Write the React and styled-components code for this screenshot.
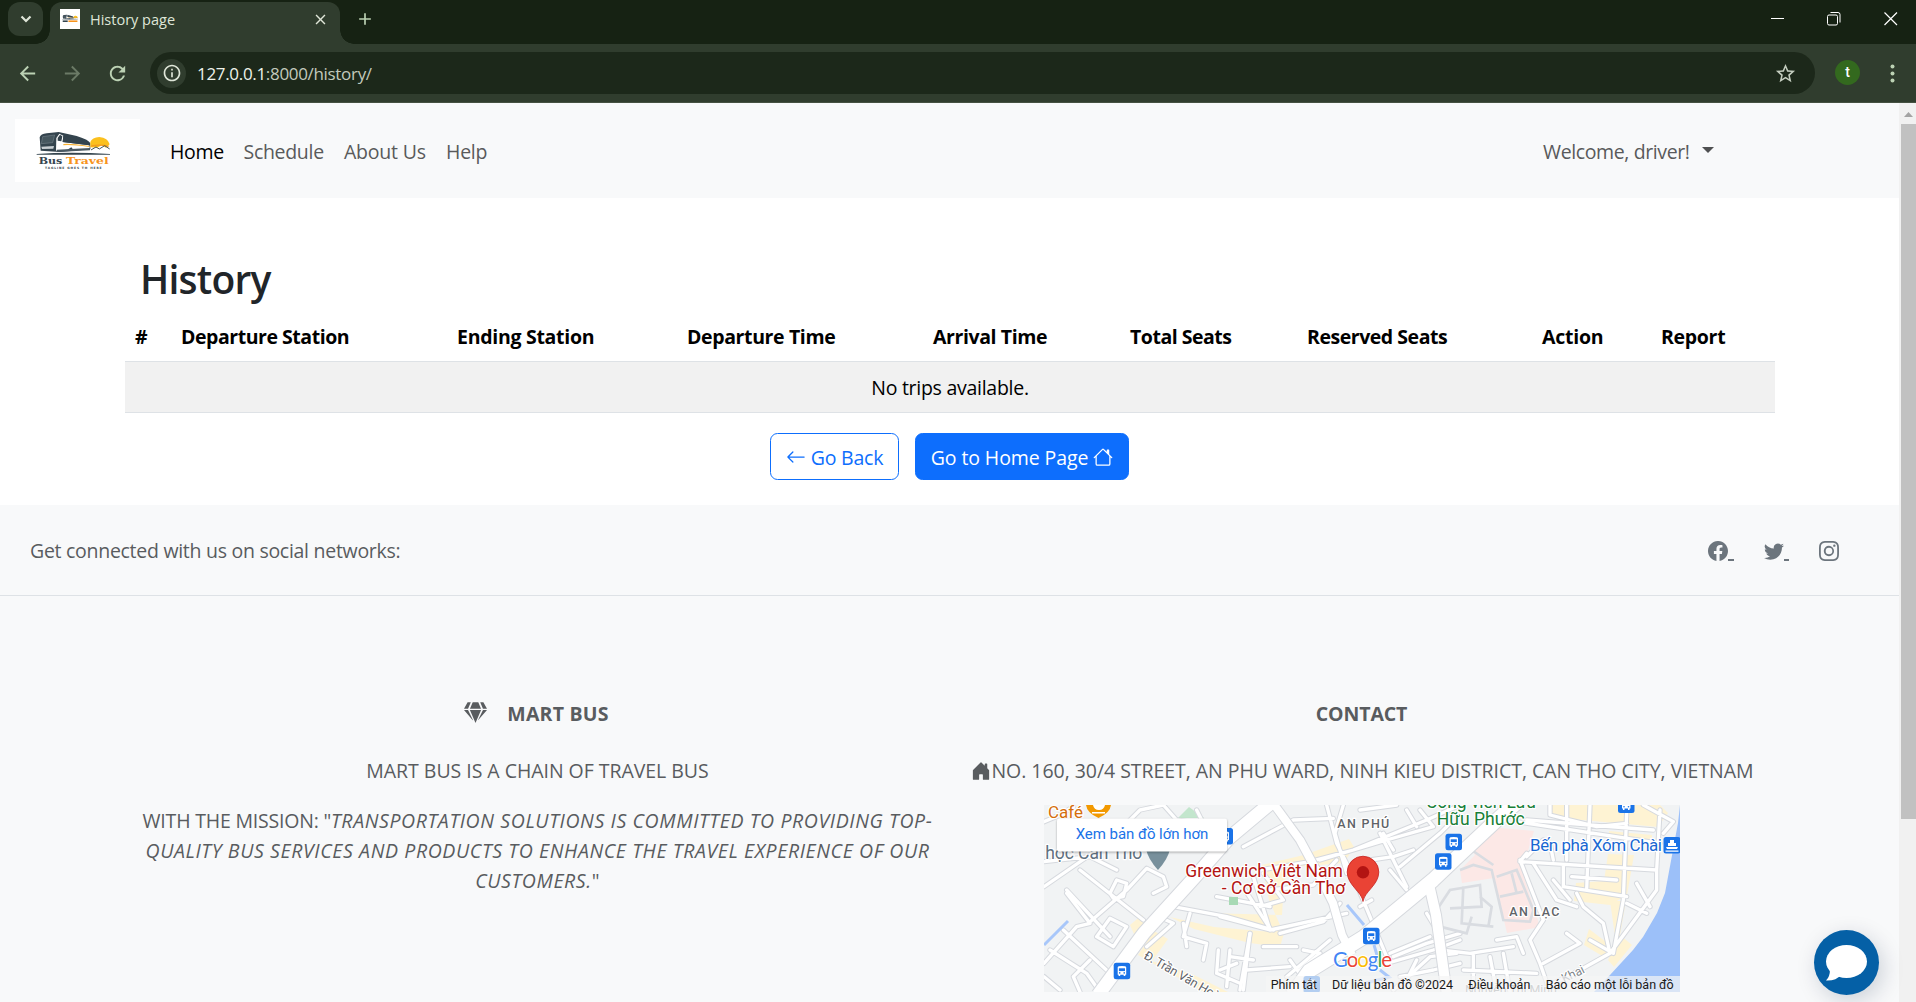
import React from "react";
import styled, { createGlobalStyle } from "styled-components";
import { BsArrowLeft, BsHouse, BsFacebook, BsTwitter, BsInstagram, BsHouseDoorFill } from "react-icons/bs";
import { FaGem } from "react-icons/fa";
import { MdArrowBack, MdArrowForward, MdRefresh, MdStarBorder, MdInfoOutline, MdClose, MdAdd } from "react-icons/md";

const sans = `"Open Sans", "Noto Sans", sans-serif`;

const Global = createGlobalStyle`
  * { box-sizing: border-box; }
  body { margin: 0; overflow: hidden; background: #fff; font-family: ${sans}; font-size: 19.5px; line-height: 30px; color: #212529; }
  h2, h6, p { margin: 0; }
  svg { display: block; }
`;

const Shell = styled.div`display: flex; flex-direction: column; height: 1002px; overflow: hidden;`;
const T = styled.span`display: inline-block; padding-top: 2px; white-space: nowrap; letter-spacing: ${(p) => p.$ls || 0}px;`;
const Slanted = styled.em`letter-spacing: .61px;`;

/* browser chrome */
const TabStrip = styled.div`height: 44px; flex: none; background: #162213; display: flex; align-items: flex-start; padding: 2px 0 0 8px;`;
const TabSearch = styled.div`width: 35px; height: 34px; border-radius: 12px; background: #303d2e; display: flex; align-items: center; justify-content: center;`;
const Tab = styled.div`
  position: relative; margin-left: 7px; width: 290px; height: 42px; border-radius: 12px 12px 0 0; background: #303d2e;
  display: flex; align-items: center; padding: 0 11px 7px 10px; font-size: 14.5px; color: #dfe6d8;
  &::before, &::after { content: ""; position: absolute; bottom: 0; width: 14px; height: 14px; }
  &::before { left: -14px; background: radial-gradient(circle at 0 0, transparent 13.5px, #303d2e 14px); }
  &::after { right: -14px; background: radial-gradient(circle at 100% 0, transparent 13.5px, #303d2e 14px); }
`;
const Favicon = styled.svg`width: 20px; height: 20px; margin-top: -1px; background: #fff;`;
const TabTitle = styled.div`margin-left: 10px; flex: 1; padding-bottom: 1px;`;
const NewTab = styled.div`margin: 7px 0 0 15px; color: #bcd2b4;`;
const WindowButtons = styled.div`margin-left: auto; padding: 10px 18px 0 0; display: flex; gap: 43px;`;
const Toolbar = styled.div`
  height: 59px; flex: none; background: #303d2e; border-bottom: 1px solid #455142; display: flex; align-items: center;
  padding: 0 21px 0 16px; color: #bcd2b4;
`;
const NavIcons = styled.div`display: flex; gap: 22px; width: 134px; flex: none;`;
const Dim = styled.div`color: #6b7a66;`;
const Omnibox = styled.div`
  height: 42px; width: 1665px; flex: none; border-radius: 21px; background: #1c281a; display: flex; align-items: center; padding: 0 18px 0 7px;
`;
const Info = styled.div`width: 29px; height: 29px; border-radius: 50%; background: #303d2e; color: #dfe6d8; display: flex; align-items: center; justify-content: center;`;
const Url = styled.div`margin-left: 11px; flex: 1; font-size: 17px; color: #c2cabd; b { font-weight: 400; color: #eef3ea; }`;
const Star = styled.div`color: #c4cdbf;`;
const Avatar = styled.div`margin: 0 0 1px 20px; width: 25px; height: 25px; border-radius: 50%; background: #33691e; color: #fff; font: 500 14px/24px Roboto, sans-serif; text-align: center;`;
const Dots = styled.svg`margin-left: auto;`;

/* page */
const Viewport = styled.div`flex: 1; display: flex; min-height: 0;`;
const Page = styled.div`width: 1899px; overflow: hidden;`;
const Scrollbar = styled.div`width: 17px; background: #f1f1f1; padding: 9px 0 0 2px;`;
const Thumb = styled.div`height: 695px; margin-top: 7px; background: #c1c1c1;`;

const Navbar = styled.nav`height: 95px; background: #f8f9fa; display: flex; align-items: center; padding: 0 185px 0 15px;`;
const Logo = styled.svg`width: 125px; height: 63px; background: #fff; margin-right: 20px;`;
const NavLink = styled.a`width: ${(p) => p.$w}px; padding-left: 10px; white-space: nowrap; color: ${(p) => (p.$active ? "#000" : "#595a5b")};`;
const UserMenu = styled.div`margin-left: auto; display: flex; align-items: center; gap: 12px; color: #595a5b; width: 171px;`;
const Caret = styled.i`border: 6px solid transparent; border-top-color: #4f5051; border-bottom: 0; margin-bottom: 2px;`;

const Main = styled.main`width: 1650px; margin: 0 auto 0 125px; padding-top: 55px; height: 307px;`;
const Title = styled.h2`height: 48px; font-size: 39px; line-height: 48px; font-weight: 600; padding-left: 15px; margin-bottom: 10px;`;
const Table = styled.table`width: 1650px; table-layout: fixed; border-collapse: separate; border-spacing: 0; color: #000;`;
const Th = styled.th`width: ${(p) => p.$w}px; height: 51px; padding: 0 0 0 10px; text-align: left; font-weight: 700; white-space: nowrap; border-bottom: 1px solid #dee2e6;`;
const Empty = styled.td`height: 51px; background: #f1f1f1; text-align: center; padding: 0; border-bottom: 1px solid #dee2e6;`;
const Actions = styled.div`display: flex; gap: 16px; justify-content: center; margin-top: 20px; padding-right: 1px;`;
const Button = styled.button`
  width: ${(p) => p.$w}px; height: 47px; border-radius: 7.5px; border: 1px solid #0d6efd; font: inherit; padding: 0;
  display: flex; align-items: center; justify-content: center; gap: 5px; white-space: nowrap;
  background: ${(p) => (p.$primary ? "#0d6efd" : "#fff")}; color: ${(p) => (p.$primary ? "#fff" : "#0d6efd")};
`;

const Footer = styled.footer`background: #f8f9fa; color: #595c5f; height: 497px;`;
const Social = styled.section`height: 91px; border-bottom: 1px solid #dee2e6; display: flex; align-items: center; justify-content: space-between; padding: 0 60px 0 30px;`;
const SocialLinks = styled.div`display: flex; padding-top: 1px; color: #6c757d;`;
const SocialLink = styled.a`display: flex; align-items: flex-end; width: ${(p) => (p.$last ? 20 : 55.5)}px;
  &::after { content: ""; width: ${(p) => (p.$last ? 0 : 5.5)}px; height: 2px; background: #6c757d; }`;
const Columns = styled.div`display: grid; grid-template-columns: 825px 825px; padding: 106px 0 0 125px;`;
const Col = styled.div`display: flex; flex-direction: column; align-items: center; text-align: center; padding: 0 16px 0 14px;`;
const Heading = styled.h6`
  font-size: 19.5px; line-height: 24px; font-weight: 700; display: flex; gap: 20px; height: 24px; margin-bottom: 29px; white-space: nowrap;
  > svg { margin-top: -1px; }
  > span { padding-top: 0; }
`;
const Para = styled.p`margin-bottom: 20px; display: flex; flex-direction: column; align-items: center; padding-left: 2px;`;
const Line = styled.span`display: flex; align-items: center; height: 30px; white-space: nowrap; > svg { margin-top: 1px; }`;
const MapFrame = styled.div`width: 636px; height: 187px;`;
const Chat = styled.div`
  position: fixed; left: 1814px; top: 930px; width: 65px; height: 65px; border-radius: 50%; background: #0560a6;
  display: flex; align-items: center; justify-content: center; box-shadow: 4px 6px 22px rgba(0, 30, 60, .18);
`;

const Bus = () => (
  <g>
    <path d="M89 82Q92 72 110 70L146 66L200 78Q238 90 241 100L241 118L150 126L92 122Z" fill="#34444e" />
    <path d="M139 84L148 71L160 77L158 96L238 106L240 120L190 119L184 112L172 119L138 122Z" fill="#fff" />
    <path d="M143 84L150 74L157 79L154 94L143 92Z" fill="#34444e" />
    <path d="M160 78L200 84L238 98L238 106L158 96Z" fill="#34444e" />
    <path d="M160 102Q175 99 238 108L238 111Q180 103 160 106Z" fill="#f9b233" />
    <path d="M140 119L240 114L240 121L142 126Z" fill="#4a5962" />
    <path d="M98 80L134 75L128 98L94 101Z" fill="#46575f" stroke="#7f8c94" strokeWidth="1.500" />
    <path d="M94 110L132 108L130 116L96 117Z" fill="#c9cfd3" />
    <path d="M241 96Q246 82 268 81Q294 83 299 103L288 113L275 106L262 113L241 112Z" fill="#fbc01e" />
    <path d="M244 108Q270 102 296 109" stroke="#f39a1f" strokeWidth="4" fill="none" />
    <path d="M243 120L258 111L268 117L284 107L299 117" stroke="#45545c" strokeWidth="3" fill="none" />
    <path d="M80 132Q180 124 300 132L300 134L80 134Z" fill="#34444e" />
  </g>
);

const B = ({ x, y }) => (
  <g transform={`translate(${x} ${y})`}>
    <rect width="16.5" height="16.5" rx="2.5" fill="#1a73e8" />
    <path d="M4 4.6Q4 3.4 8.2 3.4Q12.5 3.4 12.5 4.6V12H11.6V13.4H10V12H6.5V13.4H4.9V12H4Z" fill="#fff" />
    <path d="M5.2 5.6H11.3V8.4H5.2Z" fill="#1a73e8" />
    <circle cx="6" cy="10.2" r=".8" fill="#1a73e8" /><circle cx="10.5" cy="10.2" r=".8" fill="#1a73e8" />
  </g>
);

const west = "M42 290L230 160L330 60L400 45M42 95L90 75L130 50M150 240L340 390M110 300L240 440M42 215L180 200L260 240M175 400L290 300L350 235L400 260L410 290L370 310M240 310L260 270L290 280L280 320L250 325ZM42 520L140 410L180 400L110 310M60 480L170 550L210 606M100 420L235 545M42 560L90 600M150 606L130 560L180 510M200 440L250 470L290 410L240 385L200 440M350 470L430 400L385 380M430 350L590 380L730 420M480 370L460 440L530 460L520 510M560 320L720 350M645 300L720 415M470 470L460 400M660 430L640 600M565 480L560 550L630 580M600 480L590 590M650 540L780 530M400 45L440 90L560 110M500 60L520 100";
const mid = "M70 170L220 90L340 85M320 45L350 160L400 260L500 500M370 45L345 130L380 250M120 240L270 215L400 180L620 90L720 45M150 300L280 285L350 210M480 130L560 290M420 60L530 45M540 230L660 130L690 100M300 210L500 150L640 110M0 380L150 420L380 370M100 260L150 420M130 250L190 330L120 350M180 430L310 395L360 340M240 540L300 490L250 480M130 470L230 470M200 560L330 450M210 510L260 580M520 500L620 460L720 430M500 520L640 480L720 450M540 560L640 540L720 520M620 370L650 420M420 350L455 330M600 60L640 110M560 60L590 110M520 180L490 130M590 510L560 570M90 430L60 600M30 500L100 510M0 540L50 520";
const east = "M500 95L930 160M530 90L910 120M600 45L600 75L740 110L830 100M650 45L650 210M720 45L710 300M830 70L820 330M930 60L920 240M880 45L970 95L940 130M510 215L920 240M510 210L580 390L540 450M550 220L620 330L680 350M600 160L610 210M640 230L640 290L830 320M820 330L790 490M680 310L700 350L760 400L780 490M665 260L800 270M610 270L660 330M530 200L580 150M780 490L690 540L560 606M780 490L920 300L920 240M720 450L790 490M540 450L570 520L600 606M580 520L690 460L650 430M440 450L500 440L520 490M270 480L360 490L490 470M370 490L370 606M420 500L440 606M460 490L480 606M340 540L560 550M120 490L240 440M530 190L510 215M830 340L890 370M860 280L900 350M130 600L240 500L320 490M120 240L170 300M60 210L130 200L190 180";

const Roads = () => (
  <>
    {[["#d6d9de", 16], ["#fff", 10]].map(([c, w]) => (
      <g key={c} fill="none" stroke={c} strokeWidth={w} strokeLinejoin="round" strokeLinecap="round">
        <path d={west} transform="translate(-14 -15) scale(.33333)" />
        <path d={mid} transform="translate(176 -15) scale(.33333)" />
        <path d={east} transform="translate(306 -15) scale(.33333)" />
      </g>
    ))}
    <path transform="translate(306 -15) scale(.33333)" fill="none" stroke="#d9dce1" strokeWidth="8" d="M260 360L300 300L390 285L395 350L300 355M340 290L335 400L430 410M270 410L350 430L365 380M390 320L425 350L415 410M330 240L370 225L425 240L460 390L540 395L550 360L500 240L440 260M450 320L520 305M485 250L500 310M365 180L430 225" />
    {[["#d6d9de", 2], ["#fff", 0]].map(([c, w]) => (
      <g key={c} fill="none" stroke={c} strokeLinejoin="round">
        <path d="M54 190L100 128L150 73L185 33L228 -3" strokeWidth={13 + w} />
        <path d="M229 -2L256 35L276 72L289 98L298 130L308 150" strokeWidth={8 + w} />
        <path d="M248 190L265 166L320 132L389 75L410 55L456 12L475 -4" strokeWidth={14 + w} />
        <path d="M384 75L392 110L403 190" strokeWidth={10 + w} />
      </g>
    ))}
  </>
);

const L = ({ w, children, ...r }) => (
  <text textLength={w} lengthAdjust="spacing" fontFamily="Roboto, sans-serif" stroke="#fff" strokeWidth="2.4" strokeLinejoin="round" paintOrder="stroke" {...r}>{children}</text>
);

const MapLink = styled.rect`filter: drop-shadow(0 1px 1px rgba(0, 0, 0, .3));`;

const Map = () => (
  <svg width="636" height="187" viewBox="0 0 636 187">
    <rect width="636" height="187" fill="#f1f3f4" />
    <g fill="#fef3d3">
      <path d="M218 60L260 50L305 34L310 42L300 58L250 62L240 76L238 110L160 108L210 120L235 135L236 120L225 95Z" />
      <path d="M126 112L170 122L240 128L236 142L206 138L150 124ZM110 126L124 134L108 156L150 170L184 187L160 187L94 150Z" />
      <path d="M506 0L616 0L624 8L614 22L506 12ZM565 26L608 30V37L565 33ZM564 49L590 50L583 90L566 100L530 96L532 78L560 76ZM566 96H582L576 130L588 140L570 162L564 155L572 138ZM545 124L566 140L560 152L540 140ZM86 120L98 110L104 120L94 138Z" />
    </g>
    <path d="M446 22L490 26L478 66L496 122L463 128L450 73L418 78L416 65L431 50L426 42Z" fill="#fce8e6" />
    <path d="M134 13L145 2L160 13Z" fill="#c3e6cd" />
    <Roads />
    <rect x="185" y="92" width="9" height="8" fill="#a8dab5" />
    <path d="M0 140L24 116M303 100L320 120M330 140L336 160M336 165L345 172L322 178" stroke="#a8c7fa" strokeWidth="3" fill="none" />
    <path d="M636 0L634 18L629 45L621 88L613 108L599 132L589 145L566 170L550 187H636Z" fill="#9cc0f9" />
    <L x="4" y="12.7" w="35" fontSize="17" fill="#d56e0c">Café</L>
    <path d="M42 0H67Q66 8 54.500 13Q43 8 42 0Z" fill="#f29900" /><path d="M49 0H61Q60 5 55 5Q50 5 49 0ZM48 7H61V8.500H48Z" fill="#fff" />
    <L x="1.300" y="54" w="97" fontSize="17.500" fill="#607080">học Cần Thơ</L>
    <path d="M102 44H126Q124 54 114 65Q104 54 102 44Z" fill="#78909c" />
    <B x={172.500} y={23} /><B x={401.500} y={28.700} /><B x={391} y={48.300} /><B x={319} y={122.700} /><B x={574} y={-8.500} /><B x={69.700} y={157.700} />
    <rect x="619.500" y="32" width="17" height="16.500" rx="2.500" fill="#1a73e8" /><path d="M626 35H630V38H632V41H624V38H626ZM622 42H634L633 44H623ZM621.500 45.500H634.500V46.800H621.500Z" fill="#fff" />
    <L x="141.300" y="71.700" w="157.500" fontSize="17.500" fill="#b31412">Greenwich Việt Nam</L>
    <L x="177.700" y="89" w="123.500" fontSize="17.500" fill="#b31412">- Cơ sở Cần Thơ</L>
    <path d="M319 96.500C318 87 303.200 80 303.200 67A15.800 15.800 0 0 1 334.800 67C334.800 80 320 87 319 96.500Z" fill="#ea4335" stroke="#c5221f" strokeWidth=".8" /><circle cx="319" cy="67.300" r="6.200" fill="#b31412" />
    <L x="293.300" y="23" w="52" fontSize="12.500" fontWeight="500" fill="#5f6368">AN PHÚ</L>
    <L x="465.300" y="111" w="50" fontSize="12.500" fontWeight="500" fill="#5f6368">AN LẠC</L>
    <L x="382" y="3" w="110" fontSize="17.500" fill="#188038">Công viên Lưu</L>
    <L x="392.700" y="20" w="88" fontSize="17.500" fill="#188038">Hữu Phước</L>
    <L x="486" y="46" w="132" fontSize="17" fill="#1967d2">Bến phà Xóm Chài</L>
    <L transform="translate(99 153) rotate(30)" fontSize="12.500" w="88" fill="#5f6368">Đ. Trần Văn Hoài</L>
    <L x="421" y="189" w="92" fontSize="12.500" fill="#80868b">Nguyễn Thị Minh</L>
    <L transform="translate(520 178) rotate(-26)" fontSize="12.500" w="24" fill="#80868b">Khai</L>
    <text x="289" y="161.700" fontFamily="Lato, sans-serif" fontSize="20.500" textLength="59" stroke="#fff" strokeWidth="2" paintOrder="stroke">
      <tspan fill="#4285f4">G</tspan><tspan fill="#ea4335">o</tspan><tspan fill="#fbbc04">o</tspan><tspan fill="#4285f4">g</tspan><tspan fill="#34a853">l</tspan><tspan fill="#ea4335">e</tspan>
    </text>
    <B x={259.500} y={171} /><rect x="222" y="171" width="414" height="16" fill="#f5f5f5" opacity=".7" />
    <g fontFamily="Roboto, sans-serif" fontSize="12.500" fill="#1a1a1a">
      <text x="226.700" y="184" textLength="46.500">Phím tắt</text><text x="288" y="184" textLength="121">Dữ liệu bản đồ ©2024</text>
      <text x="424.300" y="184" textLength="62">Điều khoản</text><text x="501.700" y="184" textLength="128">Báo cáo một lỗi bản đồ</text>
    </g>
    <MapLink x="13" y="13.500" width="170" height="33" rx="2" fill="#fff" />
    <text x="31.700" y="34.300" fontFamily="Roboto, sans-serif" fontSize="15" textLength="132.500" fill="#1a73e8">Xem bản đồ lớn hơn</text>
  </svg>
);

const heads = [["#", 46, 0], ["Departure Station", 276, -0.46], ["Ending Station", 230, -0.28], ["Departure Time", 246, -0.37], ["Arrival Time", 197, -0.4], ["Total Seats", 177, -0.48], ["Reserved Seats", 235, -0.46], ["Action", 119, -0.25], ["Report", 124, -0.3]];

export default function App() {
  return (
    <Shell>
      <Global />
      <TabStrip>
        <TabSearch><svg width="12" height="8" viewBox="0 0 12 8" fill="none" stroke="#dfe6d8" strokeWidth="2.200"><path d="M1.500 1.500L6 6L10.500 1.500" /></svg></TabSearch>
        <Tab>
          <Favicon viewBox="50 20 280 210"><Bus /><rect x="88" y="145" width="70" height="22" fill="#34444e" /><rect x="168" y="145" width="126" height="22" fill="#f7941d" /></Favicon>
          <TabTitle><T>History page</T></TabTitle>
          <MdClose size={17} />
        </Tab>
        <NewTab><MdAdd size={20} /></NewTab>
        <WindowButtons>
          <svg width="13" height="13" stroke="#fff" fill="none"><path d="M0 6.500H13" /></svg>
          <svg width="14" height="14" stroke="#fff" fill="none"><rect x=".5" y="3" width="10" height="10" rx="1.500" /><path d="M3.500 .5H11Q13 .5 13 2.500V10.500" /></svg>
          <svg width="14" height="14" stroke="#fff" strokeWidth="1.200"><path d="M.5 .5L13 13M13 .5L.5 13" /></svg>
        </WindowButtons>
      </TabStrip>
      <Toolbar>
        <NavIcons><MdArrowBack size={23} /><Dim><MdArrowForward size={23} /></Dim><MdRefresh size={23} /></NavIcons>
        <Omnibox>
          <Info><MdInfoOutline size={20} /></Info>
          <Url><T $ls={-0.32}><b>127.0.0.1</b>:8000/history/</T></Url>
          <Star><MdStarBorder size={23} /></Star>
        </Omnibox>
        <Avatar>t</Avatar>
        <Dots width="5" height="19" fill="#bcd2b4"><circle cx="2.500" cy="2.500" r="2" /><circle cx="2.500" cy="9.500" r="2" /><circle cx="2.500" cy="16.500" r="2" /></Dots>
      </Toolbar>
      <Viewport>
        <Page>
          <Navbar>
            <Logo viewBox="0 0 125 63">
              <g transform="translate(-5 -9) scale(.33333)">
                <Bus />
                <text x="86" y="163" fontFamily="DejaVu Serif, serif" fontWeight="700" fontSize="25" textLength="71" lengthAdjust="spacingAndGlyphs" fill="#34444e">Bus</text>
                <text x="168" y="163" fontFamily="DejaVu Serif, serif" fontWeight="700" fontSize="25" textLength="128" lengthAdjust="spacingAndGlyphs" fill="#f7941d">Travel</text>
                <text x="105" y="176" fontFamily="DejaVu Sans, sans-serif" fontWeight="700" fontSize="9" textLength="170" fill="#34444e">TAGLINE GOES TO HERE</text>
              </g>
            </Logo>
            <NavLink $w={73.500} $active><T $ls={-0.3}>Home</T></NavLink>
            <NavLink $w={100.500}><T $ls={-0.3}>Schedule</T></NavLink>
            <NavLink $w={102}><T $ls={-0.22}>About Us</T></NavLink>
            <NavLink $w={62}><T $ls={-0.25}>Help</T></NavLink>
            <UserMenu><T $ls={-0.38}>Welcome, driver!</T><Caret /></UserMenu>
          </Navbar>
          <Main>
            <Title><T $ls={-0.8}>History</T></Title>
            <Table>
              <thead><tr>{heads.map(([h, w, ls]) => <Th key={h} $w={w}><T $ls={ls}>{h}</T></Th>)}</tr></thead>
              <tbody><tr><Empty colSpan={9}><T $ls={-0.27}>No trips available.</T></Empty></tr></tbody>
            </Table>
            <Actions>
              <Button $w={129}><BsArrowLeft size={20} /><T $ls={-0.2}>Go Back</T></Button>
              <Button $w={214} $primary><T $ls={-0.1}>Go to Home Page</T><BsHouse size={20} /></Button>
            </Actions>
          </Main>
          <Footer>
            <Social>
              <T $ls={-0.28}>Get connected with us on social networks:</T>
              <SocialLinks>
                <SocialLink><BsFacebook size={20} /></SocialLink>
                <SocialLink><BsTwitter size={20} /></SocialLink>
                <SocialLink $last><BsInstagram size={20} /></SocialLink>
              </SocialLinks>
            </Social>
            <Columns>
              <Col>
                <Heading><FaGem size={23} /><T $ls={0.2}>MART BUS</T></Heading>
                <Para><Line><T $ls={-0.04}>MART BUS IS A CHAIN OF TRAVEL BUS</T></Line></Para>
                <Para>
                  <Line><T $ls={-0.2}>WITH THE MISSION: "<Slanted>TRANSPORTATION SOLUTIONS IS COMMITTED TO PROVIDING TOP-</Slanted></T></Line>
                  <Line><T><Slanted>QUALITY BUS SERVICES AND PRODUCTS TO ENHANCE THE TRAVEL EXPERIENCE OF OUR</Slanted></T></Line>
                  <Line><T $ls={0.3}><Slanted>CUSTOMERS.</Slanted>"</T></Line>
                </Para>
              </Col>
              <Col>
                <Heading><T $ls={-0.1}>CONTACT</T></Heading>
                <Para><Line><BsHouseDoorFill size={20} /><T $ls={-0.04}>NO. 160, 30/4 STREET, AN PHU WARD, NINH KIEU DISTRICT, CAN THO CITY, VIETNAM</T></Line></Para>
                <MapFrame><Map /></MapFrame>
              </Col>
            </Columns>
          </Footer>
        </Page>
        <Scrollbar>
          <svg width="15" height="5"><path d="M3 5L7.500 0L12 5Z" fill="#a3a3a3" /></svg>
          <Thumb />
        </Scrollbar>
      </Viewport>
      <Chat><svg width="41" height="36" viewBox="0 0 41 36" fill="#fff"><ellipse cx="20.500" cy="16.500" rx="20.500" ry="16.500" /><path d="M4 24Q4 32 0 35.500Q10 36 15 30Z" /></svg></Chat>
    </Shell>
  );
}
